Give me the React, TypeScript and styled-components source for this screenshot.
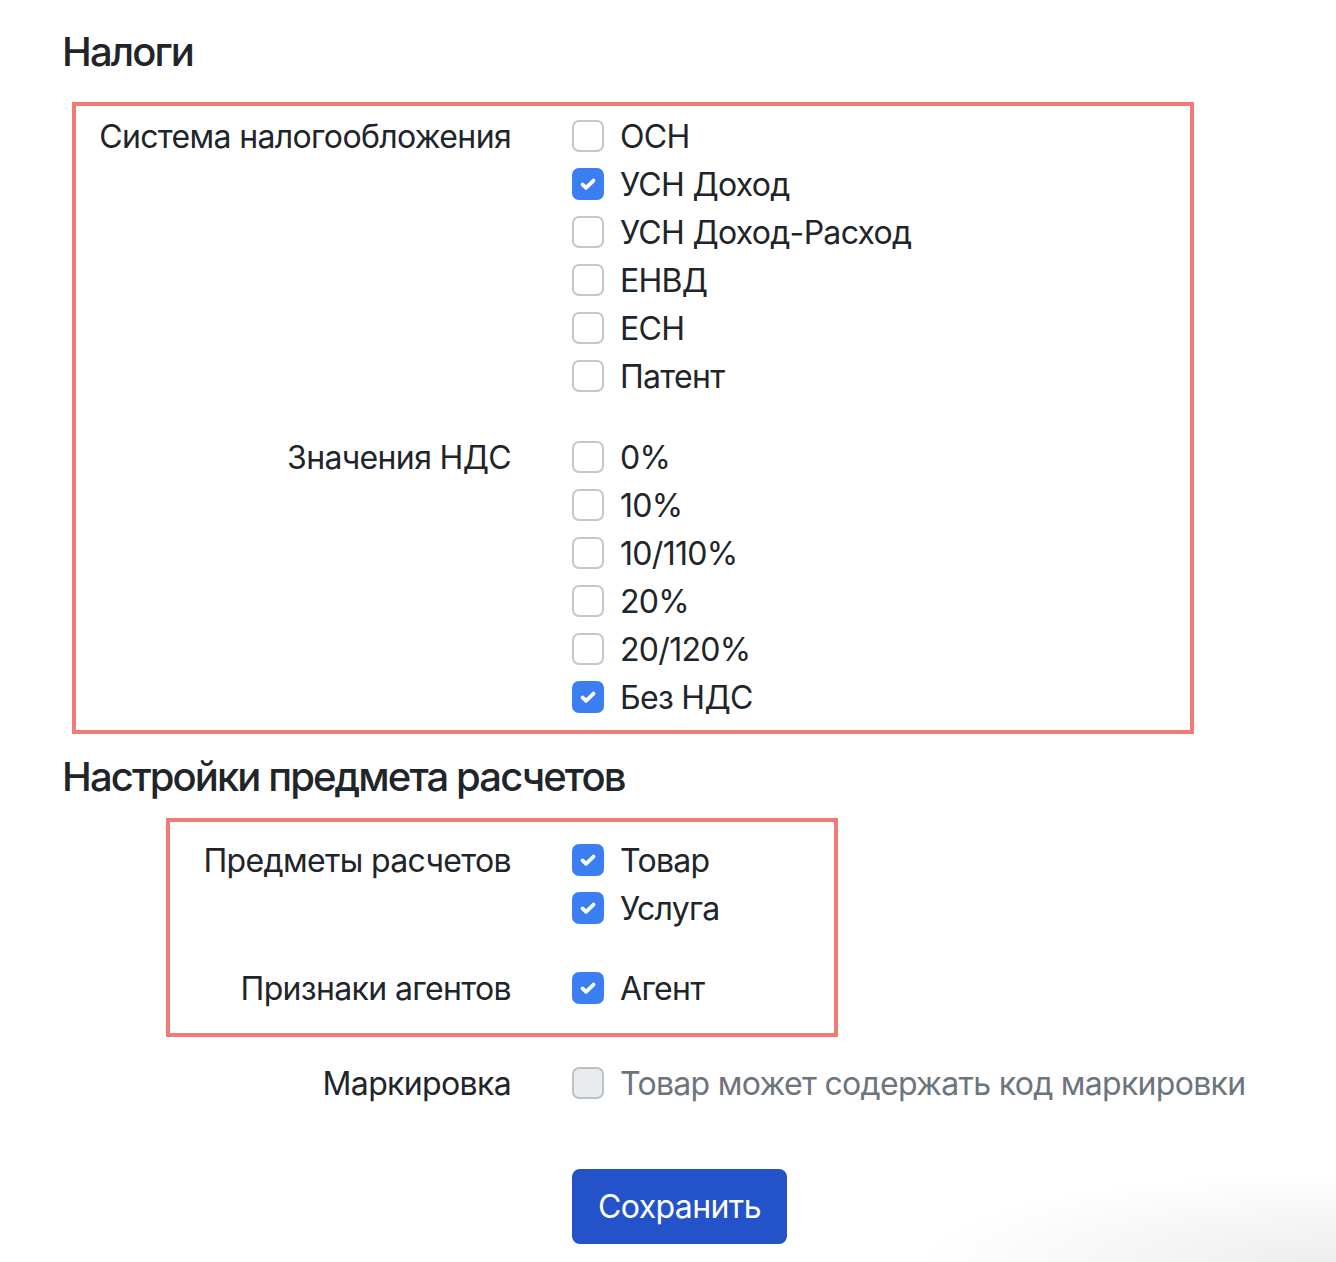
import React from "react";
import styled, { createGlobalStyle } from "styled-components";

const GlobalStyle = createGlobalStyle`
  html, body { margin: 0; padding: 0; }
  body {
    min-height: 1262px;
    font-family: Inter, "Noto Sans", "Liberation Sans", sans-serif;
    color: #212529;
    background:
      radial-gradient(ellipse 420px 90px at 100% 100%, rgba(0,0,0,0.07), rgba(0,0,0,0) 100%),
      #ffffff;
  }
  * { box-sizing: border-box; }
`;

const Page = styled.div`
  display: flex;
  flex-direction: column;
  align-items: flex-start;
  padding: 28px 0 0 62px;
`;

const Title = styled.h5<{ $mt?: number }>`
  margin: ${(p) => p.$mt ?? 0}px 0 0 0;
  font-size: 40px;
  font-weight: 500;
  line-height: 48px;
  letter-spacing: -1.9px;
`;

const Highlight = styled.div<{ $ml: number; $w: number; $mt: number; $pt: number; $pb: number; $gap: number }>`
  margin-top: ${(p) => p.$mt}px;
  margin-left: ${(p) => p.$ml}px;
  width: ${(p) => p.$w}px;
  border: 4px solid #ef7a76;
  padding: ${(p) => p.$pt}px 0 ${(p) => p.$pb}px 0;
  display: flex;
  flex-direction: column;
  gap: ${(p) => p.$gap}px;
`;

const Group = styled.div<{ $labelWidth: number; $mt?: number }>`
  display: grid;
  grid-template-columns: ${(p) => p.$labelWidth}px auto;
  column-gap: 61px;
  margin-top: ${(p) => p.$mt ?? 0}px;
`;

const GroupLabel = styled.div`
  font-size: 32px;
  line-height: 48px;
  text-align: right;
  padding-top: 1px;
  white-space: nowrap;
  letter-spacing: -0.65px;
`;

const CheckList = styled.div`
  display: flex;
  flex-direction: column;
`;

const CheckRow = styled.label<{ $disabled?: boolean }>`
  display: flex;
  align-items: center;
  gap: 16px;
  height: 48px;
  font-size: 32px;
  line-height: 48px;
  padding-top: 1px;
  white-space: nowrap;
  letter-spacing: -0.7px;
  color: ${(p) => (p.$disabled ? "#6c757d" : "#212529")};
`;

const Box = styled.span<{ $checked?: boolean; $disabled?: boolean }>`
  flex: none;
  width: 32px;
  height: 32px;
  margin-top: -1px;
  border-radius: 7px;
  display: flex;
  align-items: center;
  justify-content: center;
  border: 2px solid
    ${(p) => (p.$checked ? "#3b7ef2" : p.$disabled ? "#bcc1c8" : "#c3c8ce")};
  background: ${(p) => (p.$checked ? "#3b7ef2" : p.$disabled ? "#e9ecef" : "#ffffff")};
`;

const SaveButton = styled.button`
  margin-top: 61px;
  margin-left: 510px;
  height: 75px;
  padding: 0 24px;
  border: 2px solid #2452c9;
  border-radius: 8px;
  background: #2452c9;
  color: #ffffff;
  font-family: inherit;
  font-size: 32px;
  line-height: 48px;
  letter-spacing: -0.6px;
  cursor: pointer;
`;

const CheckMark = () => (
  <svg width="22" height="22" viewBox="0 0 20 20" fill="none">
    <path d="M5 10.4l3.2 3.1L15 6.9" stroke="#fff" strokeWidth="3.4" strokeLinecap="round" strokeLinejoin="round" />
  </svg>
);

type Item = { label: string; checked?: boolean; disabled?: boolean };

const Check = ({ label, checked, disabled }: Item) => (
  <CheckRow $disabled={disabled}>
    <Box $checked={checked} $disabled={disabled}>
      {checked && <CheckMark />}
    </Box>
    {label}
  </CheckRow>
);

const FieldGroup = ({
  title,
  items,
  labelWidth,
  mt,
}: {
  title: string;
  items: Item[];
  labelWidth: number;
  mt?: number;
}) => (
  <Group $labelWidth={labelWidth} $mt={mt}>
    <GroupLabel>{title}</GroupLabel>
    <CheckList>
      {items.map((it) => (
        <Check key={it.label} {...it} />
      ))}
    </CheckList>
  </Group>
);

export default function App() {
  return (
    <>
      <GlobalStyle />
      <Page>
        <Title>Налоги</Title>
        <Highlight $mt={26} $ml={10} $w={1122} $pt={6} $pb={9} $gap={33}>
          <FieldGroup
            title="Система налогообложения"
            labelWidth={435}
            items={[
              { label: "ОСН" },
              { label: "УСН Доход", checked: true },
              { label: "УСН Доход-Расход" },
              { label: "ЕНВД" },
              { label: "ЕСН" },
              { label: "Патент" },
            ]}
          />
          <FieldGroup
            title="Значения НДС"
            labelWidth={435}
            items={[
              { label: "0%" },
              { label: "10%" },
              { label: "10/110%" },
              { label: "20%" },
              { label: "20/120%" },
              { label: "Без НДС", checked: true },
            ]}
          />
        </Highlight>
        <Title $mt={19}>Настройки предмета расчетов</Title>
        <Highlight $mt={17} $ml={104} $w={672} $pt={14} $pb={20} $gap={32}>
          <FieldGroup
            title="Предметы расчетов"
            labelWidth={341}
            items={[
              { label: "Товар", checked: true },
              { label: "Услуга", checked: true },
            ]}
          />
          <FieldGroup
            title="Признаки агентов"
            labelWidth={341}
            items={[{ label: "Агент", checked: true }]}
          />
        </Highlight>
        <FieldGroup
          title="Маркировка"
          labelWidth={449}
          mt={22}
          items={[{ label: "Товар может содержать код маркировки", disabled: true }]}
        />
        <SaveButton type="button">Сохранить</SaveButton>
      </Page>
    </>
  );
}
